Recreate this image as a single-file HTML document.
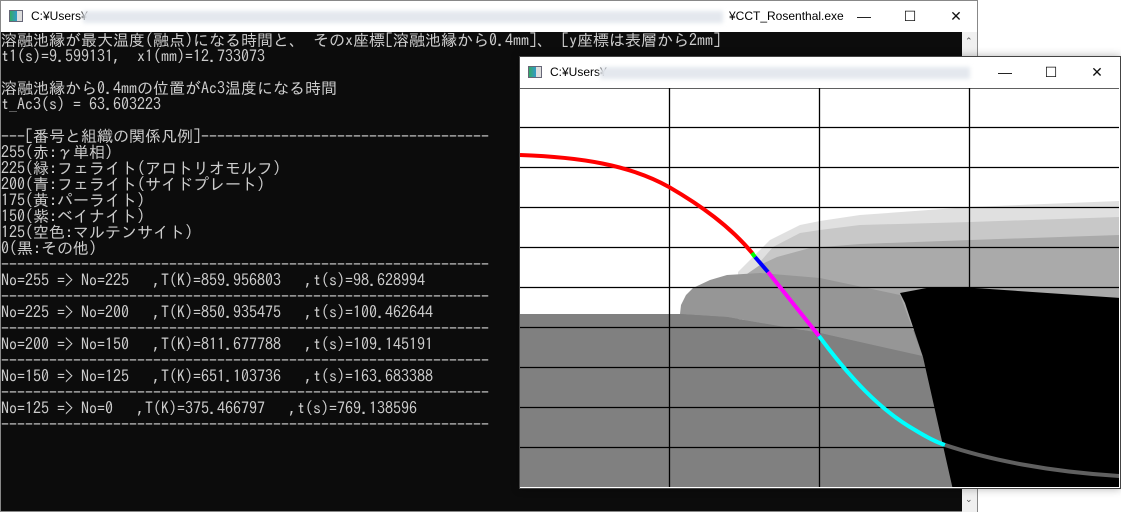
<!DOCTYPE html>
<html><head><meta charset="utf-8"><style>
*{margin:0;padding:0;box-sizing:border-box}
body{width:1121px;height:512px;overflow:hidden;background:#fff;position:relative;font-family:"Liberation Sans","Noto Sans CJK JP",sans-serif}
#con{position:absolute;left:0;top:0;width:978px;height:512px;background:#0c0c0c;border:1px solid #888}
.tb{position:absolute;left:0;top:0;right:0;height:31px;background:#fff;font-size:12px;color:#000}
.tb .ic{position:absolute;left:8px;top:9px;width:14px;height:12px;border:1px solid #667;background:linear-gradient(90deg,#3a6 0,#39c 60%,#ddd 60%)}
.tb .t{position:absolute;left:30px;top:8px}
.tb .blur{position:absolute;top:10px;height:12px;background:#e4e8ee;filter:blur(2px)}
.btn{position:absolute;top:0;width:46px;height:31px;color:#111;font-size:14px;text-align:center;line-height:31px}
pre{position:absolute;left:0;top:31px;font-family:"IPAGothic","Liberation Mono","Noto Sans CJK JP",monospace;font-size:16px;line-height:16px;color:#cccccc;white-space:pre}
.sb{position:absolute;left:961px;top:31px;width:15px;height:480px;background:#f0f0f0}
#gw{position:absolute;left:519px;top:56px;width:602px;height:433px;border:1px solid #444;background:#fff;box-shadow:0 0 8px rgba(0,0,0,.3)}
</style></head><body>
<div id="con">
<div class="tb"><div class="ic"></div><span class="t">C:¥Users¥</span><div class="blur" style="left:82px;width:640px"></div><span class="t" style="left:728px">¥CCT_Rosenthal.exe</span>
<div class="btn" style="left:840px">&#8212;</div><div class="btn" style="left:886px">&#9744;</div><div class="btn" style="left:932px">&#10005;</div></div>
<pre>溶融池縁が最大温度(融点)になる時間と、 そのx座標[溶融池縁から0.4mm]、 [y座標は表層から2mm]
t1(s)=9.599131,  x1(mm)=12.733073

溶融池縁から0.4mmの位置がAc3温度になる時間
t_Ac3(s) = 63.603223

---[番号と組織の関係凡例]------------------------------------
255(赤:γ単相)
225(緑:フェライト(アロトリオモルフ)
200(青:フェライト(サイドプレート)
175(黄:パーライト)
150(紫:ベイナイト)
125(空色:マルテンサイト)
0(黒:その他)
-------------------------------------------------------------
No=255 => No=225   ,T(K)=859.956803   ,t(s)=98.628994
-------------------------------------------------------------
No=225 => No=200   ,T(K)=850.935475   ,t(s)=100.462644
-------------------------------------------------------------
No=200 => No=150   ,T(K)=811.677788   ,t(s)=109.145191
-------------------------------------------------------------
No=150 => No=125   ,T(K)=651.103736   ,t(s)=163.683388
-------------------------------------------------------------
No=125 => No=0   ,T(K)=375.466797   ,t(s)=769.138596
-------------------------------------------------------------</pre>
<div class="sb"><div style="position:absolute;left:3px;top:4px;font-size:9px;color:#555">&#8963;</div><div style="position:absolute;left:3px;top:462px;font-size:9px;color:#555">&#8964;</div></div>
</div>
<div id="gw">
<div class="tb" style="height:31px"><div class="ic"></div><span class="t">C:¥Users¥</span><div class="blur" style="left:80px;width:370px"></div>
<div class="btn" style="left:462px">&#8212;</div><div class="btn" style="left:508px">&#9744;</div><div class="btn" style="left:554px">&#10005;</div></div>
</div>
<svg style="position:absolute;left:0;top:0" width="1121" height="512" viewBox="0 0 1121 512">
<defs><clipPath id="c"><rect x="520" y="88" width="599" height="399"/></clipPath></defs>
<g clip-path="url(#c)">
<rect x="520" y="88" width="599" height="399" fill="#fff"/>
<rect x="520" y="314" width="600" height="175" fill="#808080"/>
<polygon fill="#e0e0e0" points="738,272 753,257 770,240 800,225 820,221 860,215 970,207 1120,201 1120,330 738,330"/>
<polygon fill="#c8c8c8" points="760,262 773,247 800,233 820,230 860,225 970,222 1120,217 1120,330 760,330"/>
<polygon fill="#aaaaaa" points="744,276 760,265 777,257 810,248 860,244 970,240 1120,235 1120,330 744,330"/>
<polygon fill="#969696" points="680,314 681,305 686,295 693,288 710,280 727,275 760,273 820,278 900,295 923,357 820,333 727,317"/>
<polygon fill="#808080" points="680,314 727,317 820,333 927,357 940,420 953,490 520,490 520,314"/>
<polygon fill="#000" points="900,293 932,287 960,287 1120,298 1120,490 953,490 923,357 905,303"/>
<g stroke="#000" stroke-width="1.3">
<line x1="520" y1="88" x2="1120" y2="88"/>
<line x1="520" y1="127.5" x2="1120" y2="127.5"/><line x1="520" y1="167.5" x2="1120" y2="167.5"/><line x1="520" y1="207.5" x2="1120" y2="207.5"/><line x1="520" y1="247.5" x2="1120" y2="247.5"/><line x1="520" y1="287.5" x2="1120" y2="287.5"/><line x1="520" y1="327.5" x2="1120" y2="327.5"/><line x1="520" y1="367.5" x2="1120" y2="367.5"/><line x1="520" y1="407.5" x2="1120" y2="407.5"/><line x1="520" y1="447.5" x2="1120" y2="447.5"/>
<line x1="669.5" y1="88" x2="669.5" y2="487"/><line x1="819.5" y1="88" x2="819.5" y2="487"/><line x1="969.5" y1="88" x2="969.5" y2="487"/>
</g>
<g fill="none" stroke-width="4" stroke-linecap="butt">
<path stroke="#ff0000" d="M520,155 C580,157 630,165 669,187 C700,205 730,226 753,254"/>
<path stroke="#00ff00" d="M752,253 L755,257"/>
<path stroke="#0000ff" d="M755,257 L768,272"/>
<path stroke="#ff00ff" d="M768,272 L819,336"/>
<path stroke="#00ffff" d="M819,336 C850,378 880,410 915,430 C928,438 936,442 945,445"/>
<path stroke="#606060" d="M945,445 C990,460 1050,472 1120,476"/>
</g>
</g>
</svg>
</body></html>
